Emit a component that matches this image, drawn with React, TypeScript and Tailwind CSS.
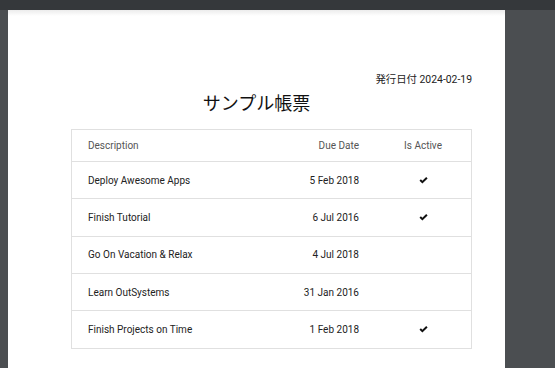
import React from "react";

const rows = [
  { d: "Deploy Awesome Apps", date: "5 Feb 2018", a: true },
  { d: "Finish Tutorial", date: "6 Jul 2016", a: true },
  { d: "Go On Vacation & Relax", date: "4 Jul 2018", a: false },
  { d: "Learn OutSystems", date: "31 Jan 2016", a: false },
  { d: "Finish Projects on Time", date: "1 Feb 2018", a: true },
];

function Check() {
  return (
    <svg width="9" height="7" viewBox="0 0 9 7" className="inline-block">
      <path d="M0.5 3.7 L1.9 2.3 L3.4 3.8 L7.2 0.1 L8.6 1.5 L3.4 6.5 Z" fill="#111" />
    </svg>
  );
}

export default function App() {
  return (
    <div className="w-[555px] h-[368px] overflow-hidden bg-[#35383b] flex flex-col" style={{ fontFamily: "Roboto, 'Noto Sans CJK JP', sans-serif" }}>
      <div className="h-[10px] shrink-0" />
      <div className="flex flex-1">
        <div className="w-[8px] bg-[#4b4e51]" />
        <div className="w-[497px] bg-white flex flex-col">
          <div className="h-[6px] bg-gradient-to-b from-[#ececec] to-white" />
          <div className="h-[69px] flex items-end justify-end pr-[33px]">
            <span className="text-[10.4px] text-[#222] leading-none" style={{ fontFamily: "Roboto, 'Noto Sans CJK JP', sans-serif" }}>発行日付 2024-02-19</span>
          </div>
          <div className="h-[30px] flex items-center justify-center pt-[3px]">
            <span className="text-[18px] text-[#111] leading-none" style={{ fontFamily: "'Noto Sans CJK JP', sans-serif" }}>サンプル帳票</span>
          </div>
          <div className="h-[14px]" />
          <div className="ml-[63px] w-[401px] border border-[#e0e0e0] text-[10px]">
            <div className="flex h-[32px] items-center text-[#555] border-b border-[#e0e0e0]">
              <div className="flex-1 pl-[16px]">Description</div>
              <div className="w-[120px] text-right pr-[16px]">Due Date</div>
              <div className="w-[96px] text-center">Is Active</div>
            </div>
            {rows.map((r, i) => (
              <div key={i} className={`flex h-[37.3px] items-center text-[#222] ${i < rows.length - 1 ? "border-b border-[#e0e0e0]" : ""}`}>
                <div className="flex-1 pl-[16px]">{r.d}</div>
                <div className="w-[120px] text-right pr-[16px]">{r.date}</div>
                <div className="w-[96px] flex justify-center">{r.a ? <Check /> : null}</div>
              </div>
            ))}
          </div>
        </div>
        <div className="flex-1 bg-[#4b4e51]" />
      </div>
    </div>
  );
}
